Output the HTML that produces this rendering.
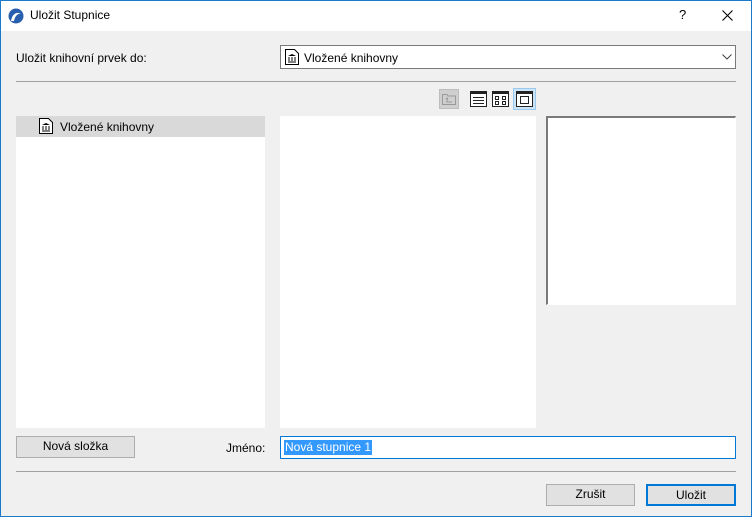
<!DOCTYPE html>
<html><head><meta charset="utf-8"><style>
*{box-sizing:border-box;margin:0;padding:0}
body{width:752px;height:517px;overflow:hidden;font-family:"Liberation Sans",sans-serif;font-size:12px;color:#000;position:relative}
.win{position:absolute;left:0;top:0;width:752px;height:517px;background:#f0f0f0}
.frame{position:absolute;left:0;top:0;width:752px;height:517px;border:1px solid #1979ca;pointer-events:none}
.title{position:absolute;left:0;top:0;width:752px;height:31px;background:#fff}
.a{position:absolute}
.btn{position:absolute;background:#e1e1e1;border:1px solid #adadad;text-align:center;line-height:19px}
</style></head><body>
<div class="win">
<div class="title">
<svg class="a" style="left:8px;top:8px" width="16" height="16" viewBox="0 0 16 16"><circle cx="8" cy="8" r="7.5" fill="#2a5fb0"/><path d="M3 13 C4 6 9 3 13 6 C10 5 7 8 6 13Z" fill="#fff"/></svg>
<div class="a" style="left:30px;top:8px;font-size:12px">Uložit Stupnice</div>
<div class="a" style="left:679px;top:7px;font-size:13px">?</div>
<svg class="a" style="left:722px;top:10px" width="11" height="11"><path d="M0.5 0.5L10.5 10.5M10.5 0.5L0.5 10.5" stroke="#000" stroke-width="1.1"/></svg>
</div>
<div class="a" style="left:16px;top:51px">Uložit knihovní prvek do:</div>
<div class="a" style="left:280px;top:45px;width:456px;height:24px;background:#fff;border:1px solid #7a7a7a"></div>
<svg class="a" style="left:285px;top:49px" width="14" height="16" viewBox="0 0 14 16"><path d="M0.5 0.5H9.5L13.5 4.5V15.5H0.5Z" fill="#fff" stroke="#000"/><path d="M3 7L7 5L11 7ZM3.5 8h1v4h-1zM6.5 8h1v4h-1zM9.5 8h1v4h-1zM3 12.5h8v1H3z" fill="#000"/></svg>
<div class="a" style="left:304px;top:51px">Vložené knihovny</div>
<svg class="a" style="left:722px;top:54px" width="10" height="6"><path d="M0.5 0.5L5 5L9.5 0.5" fill="none" stroke="#444"/></svg>
<div class="a" style="left:16px;top:81px;width:720px;height:1px;background:#a0a0a0"></div>
<div class="a" style="left:439px;top:89px;width:20px;height:20px;background:#cfcfcf;border:1px solid #bdbdbd"></div>
<svg class="a" style="left:442px;top:93px" width="14" height="12"><path d="M0.5 1.5H5L6 3H13.5V11.5H0.5Z" fill="none" stroke="#999"/><path d="M5 5V9H10M4 6L5 5L6 6" fill="none" stroke="#999"/></svg>
<svg class="a" style="left:470px;top:91px" width="17" height="16"><rect x="0.5" y="0.5" width="16" height="15" fill="#fff" stroke="#222"/><rect x="0" y="0" width="17" height="3" fill="#222"/><path d="M3 6.5H14M3 9.5H14M3 12.5H14" stroke="#222"/></svg>
<svg class="a" style="left:492px;top:91px" width="17" height="16"><rect x="0.5" y="0.5" width="16" height="15" fill="#fff" stroke="#222"/><rect x="0" y="0" width="17" height="3" fill="#222"/><rect x="3.5" y="5.5" width="3" height="3" fill="none" stroke="#222"/><rect x="10.5" y="5.5" width="3" height="3" fill="none" stroke="#222"/><rect x="3.5" y="10.5" width="3" height="3" fill="none" stroke="#222"/><rect x="10.5" y="10.5" width="3" height="3" fill="none" stroke="#222"/></svg>
<div class="a" style="left:513px;top:88px;width:23px;height:22px;background:#cce4f7;border:1px solid #99c9ef"></div>
<svg class="a" style="left:516px;top:91px" width="17" height="16"><rect x="0.5" y="0.5" width="16" height="15" fill="#fff" stroke="#222"/><rect x="0" y="0" width="17" height="3" fill="#222"/><rect x="4.5" y="5.5" width="8" height="7" fill="none" stroke="#222"/></svg>
<div class="a" style="left:16px;top:116px;width:249px;height:312px;background:#fff"></div>
<div class="a" style="left:16px;top:116px;width:249px;height:21px;background:#d9d9d9"></div>
<svg class="a" style="left:39px;top:118px" width="14" height="16" viewBox="0 0 14 16"><path d="M0.5 0.5H9.5L13.5 4.5V15.5H0.5Z" fill="#fff" stroke="#000"/><path d="M3 7L7 5L11 7ZM3.5 8h1v4h-1zM6.5 8h1v4h-1zM9.5 8h1v4h-1zM3 12.5h8v1H3z" fill="#000"/></svg>
<div class="a" style="left:60px;top:120px">Vložené knihovny</div>
<div class="a" style="left:280px;top:116px;width:256px;height:312px;background:#fff"></div>
<div class="a" style="left:546px;top:116px;width:190px;height:189px;background:#fff;border:1px solid #fff;border-top:2px solid #7a7a7a;border-left:2px solid #7a7a7a"></div>
<div class="btn" style="left:16px;top:436px;width:119px;height:22px">Nová složka</div>
<div class="a" style="left:226px;top:441px">Jméno:</div>
<div class="a" style="left:280px;top:436px;width:456px;height:23px;background:#fff;border:1px solid #0078d7"></div>
<div class="a" style="left:284px;top:440px;height:15px;line-height:15px;background:#3399ff;color:#fff;padding:0 1px">Nová stupnice 1</div>
<div class="a" style="left:16px;top:471px;width:720px;height:1px;background:#a0a0a0"></div>
<div class="btn" style="left:546px;top:484px;width:89px;height:22px">Zrušit</div>
<div class="btn" style="left:646px;top:484px;width:90px;height:22px;border:2px solid #0078d7;line-height:18px">Uložit</div>
</div>
<div class="frame"></div>
</body></html>
